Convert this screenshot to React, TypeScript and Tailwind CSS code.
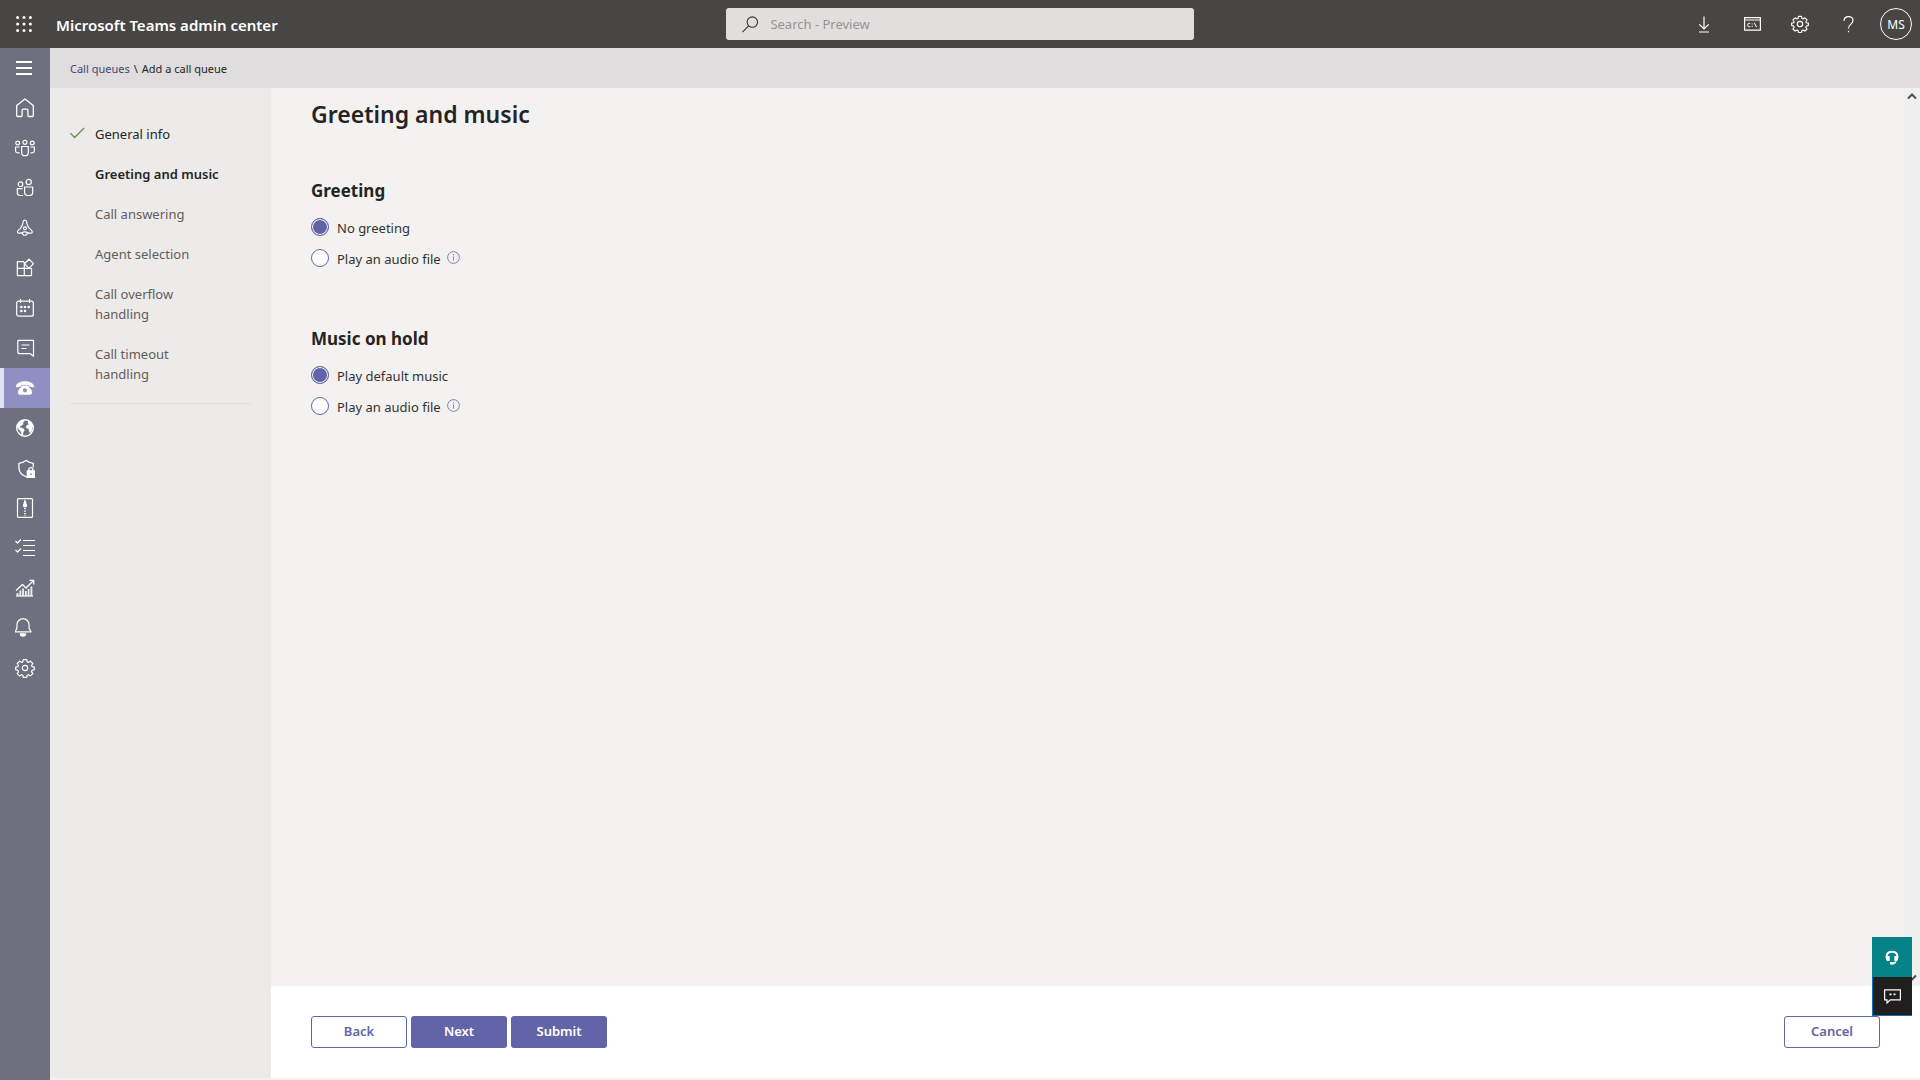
import type { ReactNode, SVGProps } from "react";

function Icon({ size = 20, children, ...rest }: { size?: number; children: ReactNode } & SVGProps<SVGSVGElement>) {
  return (
    <svg
      width={size}
      height={size}
      viewBox="0 0 20 20"
      fill="none"
      stroke="currentColor"
      strokeWidth="1.2"
      strokeLinejoin="round"
      aria-hidden="true"
      {...rest}
    >
      {children}
    </svg>
  );
}

const gearPath =
  "M8.3 1.6h3.4l.5 2.3 1.2.5 2-1.3 2.4 2.4-1.3 2 .5 1.1 2.3.5v2.6l-2.3.7-.5 1.2 1.3 2-2.4 2.3-2-1.2-1.2.5-.5 2.2H8.3l-.5-2.2-1.2-.5-2 1.2-2.4-2.3 1.3-2-.5-1.2-2.3-.7V9.1l2.3-.5.5-1.100-1.300-2 2.400-2.400 2 1.300 1.200-.5z";

const navItems: { label: string; active?: boolean; icon: ReactNode }[] = [
  {
    label: "Dashboard",
    icon: (
      <Icon strokeWidth="1.3">
        <path d="M1.700 7.600 10 1l8.300 6.600v9.900a1 1 0 0 1-1 1h-3.400a1 1 0 0 1-1-1v-5.300a1 1 0 0 0-1-1H8.100a1 1 0 0 0-1 1v5.300a1 1 0 0 1-1 1H2.700a1 1 0 0 1-1-1z" />
      </Icon>
    ),
  },
  {
    label: "Teams",
    icon: (
      <Icon>
        <circle cx="2.700" cy="5" r="1.900" />
        <circle cx="10" cy="4.300" r="2" />
        <circle cx="17.300" cy="5" r="1.900" />
        <path d="M6.700 8.500h6.600v5.900a3.300 3.300 0 0 1-6.600 0zM4.700 9H.6v3.700c0 1.600 1.400 2.600 4.100 2.100M15.300 9h4.100v3.700c0 1.600-1.400 2.600-4.100 2.100" />
      </Icon>
    ),
  },
  {
    label: "Users",
    icon: (
      <Icon>
        <circle cx="5.500" cy="6.200" r="2.300" />
        <circle cx="13.700" cy="4" r="2.600" />
        <path d="M9.600 9h8.100v5.500a3 3 0 0 1-3 3h-2.100a3 3 0 0 1-3-3zM7.500 10.700H2.300v4.100a2.700 2.700 0 0 0 2.700 2.700h3" />
      </Icon>
    ),
  },
  {
    label: "Teams devices",
    icon: (
      <Icon>
        <path d="M8.100 4c0-2.600 3.300-2.600 3.500 0 .3 3.200 1.600 5.600 4.900 8.400 1.400 1.300.8 2.900-.9 2.800l-3.100-.3c-.6 3.100-4.700 3.100-5.300 0l-3.100.3c-1.700.1-2.300-1.500-.9-2.800C6.500 9.600 7.800 7.200 8.100 4z" />
        <circle cx="9.900" cy="10.300" r="1.500" />
        <path d="M7.200 14.900c.9-1.500 4.400-1.500 5.300 0" />
      </Icon>
    ),
  },
  {
    label: "Teams apps",
    icon: (
      <Icon>
        <path d="M9 3.700H2.300v6.600h14.200v7.300H3a.7.7 0 0 1-.7-.7V10M9.300 4v13.500M16.500 10.500V17" />
        <path d="m14 1.200 4.500 4.500-4.500 4.600-4.600-4.600z" />
      </Icon>
    ),
  },
  {
    label: "Meetings",
    icon: (
      <Icon>
        <rect x="1.700" y="3.200" width="16.600" height="15" rx="2" />
        <path d="M5.500 1v4M14.500 1v4" />
        <path
          d="M9 8h2v2H9zM12.700 8h2v2h-2zM5.300 8h2v2h-2zM5.300 12h2v2h-2zM9 12h2v2H9z"
          fill="currentColor"
          strokeWidth="0.3"
        />
      </Icon>
    ),
  },
  {
    label: "Messaging policies",
    icon: (
      <Icon>
        <path d="M3.500 2.300h15v16l-3.200-2.600H4.800a2 2 0 0 1-2-2V3a.7.7 0 0 1 .7-.7zM6.500 7h8M6.500 10.500h5" />
      </Icon>
    ),
  },
  {
    label: "Voice",
    active: true,
    icon: (
      <Icon stroke="none" fill="currentColor">
        <path d="M1 8C2.500 1.700 17.500 1.700 19 8c.2 1-.5 1.400-1.400 1.200l-2.700-.6c-.8-.2-1.100-.7-1.200-1.400-2.200-.7-5.200-.7-7.400 0-.1.700-.4 1.200-1.200 1.400l-2.700.6C1.500 9.400.8 9 1 8z" />
        <path
          fillRule="evenodd"
          d="M6.800 7.800c1.800-.5 4.600-.5 6.400 0 .3 1.600 3.900 3.600 3.900 6.500 0 1.500-.8 2.400-2.100 2.400H5c-1.300 0-2.100-.9-2.100-2.400 0-2.900 3.600-4.900 3.900-6.500zm3.200 2.400a2.100 2.100 0 1 0 0 4.200 2.100 2.100 0 0 0 0-4.200z"
        />
      </Icon>
    ),
  },
  {
    label: "Locations",
    icon: (
      <Icon>
        <circle cx="10" cy="10" r="8.300" strokeWidth="1.400" />
        <path
          d="M3 5.500C4.700 3 7 2 9 1.800l.5 1.400L7.800 4.700l.7 1.200-1.800 1.700-1.900.5.7 1.600 2 .4 2.200 1.900-1.400 2.100-.3 3.500-1.300-.7-.7-3.200-2.300-2.500L2 8.500zM13.300 2.500l2.900 1.700 2.100 4.200-1.300 1 .4 2.700-2.200 3.100-1.200-2-.2-2.400-2.200-.5-.6-1.900 1.200-1.500 1.900-.4-1.200-1.300z"
          fill="currentColor"
          strokeWidth="0.200"
        />
      </Icon>
    ),
  },
  {
    label: "Enhanced encryption",
    icon: (
      <Icon strokeWidth="1.300" viewBox="0 -1 20 20">
        <path d="M12 18.200C6.500 16 3.900 13.200 3.900 9V4.300c2.900-.1 5-1 7.200-2.700 2.200 1.700 4.300 2.600 7.200 2.700v4" />
        <path d="M12.300 12h7.200v6.400h-7.200z" fill="currentColor" />
        <path d="M13.900 12v-1.400a2 2 0 0 1 4 0V12" />
        <path d="M15.900 14.500v1.500" stroke="#6e6f7f" />
      </Icon>
    ),
  },
  {
    label: "Policy packages",
    icon: (
      <Icon>
        <rect x="2.500" y=".6" width="15" height="18.800" rx="1" />
        <path d="M10 2.500 8.500 7.500A1.500 1.500 0 0 0 11.500 7.500z" fill="currentColor" />
        <path d="M10 10v8" strokeDasharray="1.300 1.200" strokeWidth="1.600" />
      </Icon>
    ),
  },
  {
    label: "Planning",
    icon: (
      <Icon>
        <path d="M8 2.500h12M8 7.500h12M8 12.500h12M8 17.500h12M.5 3l2 2L6 1.500M.5 12l2 2L6 10.500" />
      </Icon>
    ),
  },
  {
    label: "Analytics & reports",
    icon: (
      <Icon>
        <path d="m1 12.500 6.500-6 3.500 3.500 7.500-7.500M14.500 2.300h4.200v4.200" strokeWidth="1.300" />
        <path d="M2.500 15v3M5.300 12.500V18M8 10.500V18M10.800 13v5M13.600 11v7M16.400 8.500V18" strokeWidth="1.900" opacity=".85" />
        <path d="M1 18h17" />
      </Icon>
    ),
  },
  {
    label: "Notifications & alerts",
    icon: (
      <Icon viewBox="2 1 20 20">
        <path d="M1.900 14.800h16.200l-2-3.200V7.800a6.100 6.100 0 0 0-12.200 0v3.800z" />
        <path d="M7.300 16.800a2.700 2.300 0 0 0 5.400 0z" fill="currentColor" />
      </Icon>
    ),
  },
  {
    label: "Other settings",
    icon: (
      <Icon>
        <path d={gearPath} />
        <circle cx="10" cy="10" r="2.700" />
      </Icon>
    ),
  },
];

const steps = [
  { label: "General info", state: "done" },
  { label: "Greeting and music", state: "current" },
  { label: "Call answering", state: "todo" },
  { label: "Agent selection", state: "todo" },
  { label: "Call overflow handling", state: "todo" },
  { label: "Call timeout handling", state: "todo" },
];

function InfoButton() {
  return (
    <button type="button" aria-label="More information" className="ml-1.5 text-[#7f80b8]">
      <svg width="13" height="13" viewBox="0 0 13 13" fill="none" stroke="currentColor" aria-hidden="true">
        <circle cx="6.500" cy="6.500" r="5.900" />
        <path d="M6.500 5.500v4M6.500 3.200v1.200" />
      </svg>
    </button>
  );
}

function Radio({ id, name, label, checked, info }: { id: string; name: string; label: string; checked?: boolean; info?: boolean }) {
  return (
    <div className="flex h-[31px] items-center">
      <input
        id={id}
        type="radio"
        name={name}
        defaultChecked={checked}
        className="size-[18px] shrink-0 appearance-none rounded-full border border-[#6264a7] bg-white checked:border-[#6264a7] checked:bg-[#6264a7] checked:shadow-[inset_0_0_0_1px_#fff]"
      />
      <label htmlFor={id} className="pl-2 pt-0.5 text-[13px] leading-5 text-[#323130]">
        {label}
      </label>
      {info && <InfoButton />}
    </div>
  );
}

const outlineButton =
  "h-8 w-24 rounded-[3px] border border-[#6264a7] bg-white text-[13px] font-semibold text-[#6264a7]";
const solidButton = "h-8 w-24 rounded-[3px] bg-[#6264a7] text-[13px] font-semibold text-white";

export default function App() {
  return (
    <div className="flex h-screen flex-col overflow-hidden bg-[#f3f2f1] font-['Noto_Sans',sans-serif] text-[#252423]">
      <header className="grid h-12 shrink-0 grid-cols-[1fr_468px_1fr] items-center bg-[#484644] text-white">
        <div className="flex items-center">
          <button type="button" aria-label="App launcher" className="flex h-12 w-12 items-center justify-center">
            <svg width="16" height="16" viewBox="0 0 16 16" fill="currentColor" aria-hidden="true">
              {[1.600, 8, 14.400].map((y) => [1.600, 8, 14.400].map((x) => <circle key={`${x}-${y}`} cx={x} cy={y} r="1.500" />))}
            </svg>
          </button>
          <span className="pl-2 pt-0.5 text-[15px] font-semibold">Microsoft Teams admin center</span>
        </div>
        <label className="flex h-8 items-center rounded-[3px] bg-[#e1dfdd] pl-4 text-[#323130]">
          <svg width="17" height="17" viewBox="0 0 17 17" fill="none" stroke="currentColor" strokeWidth="1.100" aria-hidden="true">
            <circle cx="10.700" cy="6" r="5.400" />
            <path d="M6.800 9.900.5 16.300" />
          </svg>
          <input
            type="search"
            aria-label="Search"
            placeholder="Search - Preview"
            className="w-full bg-transparent pl-3 pt-0.5 text-[13px] outline-none placeholder:text-[#979593]"
          />
        </label>
        <div className="flex items-center justify-end pr-2">
          <button type="button" aria-label="Downloads" className="flex size-12 items-center justify-center">
            <svg width="12" height="17" viewBox="0 0 12 17" fill="none" stroke="currentColor" strokeWidth="1.200" aria-hidden="true">
              <path d="M6 .5v12M1.300 8.300 6 13l4.700-4.700M1 16h10" />
            </svg>
          </button>
          <button type="button" aria-label="Command line" className="flex size-12 items-center justify-center">
            <svg width="17" height="14" viewBox="0 0 17 14" fill="none" stroke="currentColor" aria-hidden="true">
              <path d="M.6.6h15.800v12.600H.6zM.6 3h15.800" strokeWidth="1.200" />
              <path d="M6.300 6.500c-2-.8-2.500 0-2.500 1.500s.5 2.400 2.500 1.600M8.200 6.500v1M8.200 9v1M10.300 5.800l2.300 4.500" />
            </svg>
          </button>
          <button type="button" aria-label="Settings" className="flex size-12 items-center justify-center">
            <Icon size={18} strokeWidth="1.300">
              <path d={gearPath} />
              <circle cx="10" cy="10" r="3" />
            </Icon>
          </button>
          <button type="button" aria-label="Help" className="flex size-12 items-center justify-center">
            <svg width="11" height="17" viewBox="0 0 11 17" fill="none" stroke="currentColor" strokeWidth="1.200" aria-hidden="true">
              <path d="M1 5C1 2 2.800.7 5.400.7S10 2.200 10 4.600C10 8 5.500 8.300 5.500 12.500M5.500 14.800v1.500" />
            </svg>
          </button>
          <button
            type="button"
            aria-label="Account MS"
            className="ml-2 flex size-8 items-center justify-center rounded-full border border-white pt-0.5 text-xs"
          >
            MS
          </button>
        </div>
      </header>

      <div className="flex min-h-0 flex-1">
        <nav aria-label="Main" className="flex w-[50px] shrink-0 flex-col bg-[#6e6f7f] text-white">
          <button type="button" aria-label="Toggle navigation" className="flex h-10 items-center justify-center pr-0.5">
            <svg width="16" height="14" viewBox="0 0 16 14" stroke="currentColor" strokeWidth="2" aria-hidden="true">
              <path d="M0 1h16M0 7h16M0 13h16" />
            </svg>
          </button>
          {navItems.map((item) => (
            <a
              key={item.label}
              href="#"
              aria-label={item.label}
              aria-current={item.active ? "page" : undefined}
              className={
                item.active
                  ? "flex h-10 items-center justify-center border-l-4 border-[#e2e2f6] bg-[#8f90c1] pr-1"
                  : "flex h-10 items-center justify-center"
              }
            >
              {item.icon}
            </a>
          ))}
        </nav>

        <div className="flex min-w-0 flex-1 flex-col">
          <nav aria-label="Breadcrumb" className="flex h-10 shrink-0 items-center bg-[#dfdddd] pl-5 pt-0.5 text-[11px]">
            <a href="#" className="text-[#464775]">
              Call queues
            </a>
            <span className="px-1">\</span>
            <span>Add a call queue</span>
          </nav>

          <div className="mb-0.5 flex min-h-0 flex-1">
            <aside className="w-[221px] shrink-0 bg-[#edebe9] px-5 pt-[26px]">
              <ol className="border-b border-[#e1dfdd] pb-[9px] text-[13px] leading-5">
                {steps.map((step) => (
                  <li key={step.label} className="flex py-2.5">
                    <span className="w-[25px] shrink-0 pt-[3px]">
                      {step.state === "done" && (
                        <svg width="15" height="12" viewBox="0 0 15 12" fill="none" stroke="#6b8f4e" strokeWidth="1.300" aria-label="Completed">
                          <path d="m.4 6.200 4.200 4.300L14.100 1" />
                        </svg>
                      )}
                    </span>
                    <a
                      href="#"
                      className={
                        step.state === "current"
                          ? "whitespace-nowrap font-semibold"
                          : step.state === "done"
                            ? "w-28"
                            : "w-28 text-[#605e5c]"
                      }
                    >
                      {step.label}
                    </a>
                  </li>
                ))}
              </ol>
            </aside>

            <div className="flex min-w-0 flex-1 flex-col">
              <div className="flex min-h-0 flex-1">
                <main className="min-w-0 flex-1 px-10 pt-2.5">
                  <h1 className="text-[23px] font-semibold leading-8">Greeting and music</h1>
                  <fieldset aria-labelledby="greeting-title" className="pt-[49px]">
                    <h2 id="greeting-title" className="pb-2 text-[17px] font-bold leading-6">
                      Greeting
                    </h2>
                    <Radio id="greet-none" name="greeting" label="No greeting" checked />
                    <Radio id="greet-file" name="greeting" label="Play an audio file" info />
                  </fieldset>
                  <fieldset aria-labelledby="music-title" className="pt-[54px]">
                    <h2 id="music-title" className="pb-2 text-[17px] font-bold leading-6">
                      Music on hold
                    </h2>
                    <Radio id="music-default" name="music" label="Play default music" checked />
                    <Radio id="music-file" name="music" label="Play an audio file" info />
                  </fieldset>
                </main>
                <div className="flex w-[17px] shrink-0 flex-col items-center justify-between bg-[#f0f0f1] py-1 text-[#505050]">
                  <svg width="10" height="8" viewBox="0 0 10 8" fill="none" stroke="currentColor" strokeWidth="2" aria-hidden="true">
                    <path d="m1 6.500 4-4 4 4" />
                  </svg>
                  <svg width="10" height="8" viewBox="0 0 10 8" fill="none" stroke="currentColor" strokeWidth="2" aria-hidden="true">
                    <path d="m1 1.500 4 4 4-4" />
                  </svg>
                </div>
              </div>
              <footer className="flex h-[92px] shrink-0 items-center justify-between bg-white px-10">
                <div className="flex gap-1">
                  <button type="button" className={outlineButton}>
                    Back
                  </button>
                  <button type="button" className={solidButton}>
                    Next
                  </button>
                  <button type="button" className={solidButton}>
                    Submit
                  </button>
                </div>
                <button type="button" className={outlineButton}>
                  Cancel
                </button>
              </footer>
            </div>
          </div>
        </div>
      </div>

      <div className="fixed bottom-16 right-2 flex w-10 flex-col text-white">
        <button type="button" aria-label="Need help?" className="flex h-10 items-center justify-center bg-[#038387]">
          <svg width="14" height="15" viewBox="0 0 14 15" fill="none" stroke="currentColor" aria-hidden="true">
            <path d="M3.500 10.500C.6 8.500.5 1.800 7 1.800s6.400 6.700 3.500 8.700" strokeWidth="2" />
            <path d="M3.200 6v5M10.800 6v5" strokeWidth="3" />
            <path d="M11 11.500c-.5 1.500-1.500 2-4 2" strokeWidth="1.500" />
            <path d="M5 13.300h4" strokeWidth="2.500" />
          </svg>
        </button>
        <button
          type="button"
          aria-label="Give feedback"
          className="flex h-[39px] items-center justify-center border-b border-l border-[#106ebe] bg-[#201f1e]"
        >
          <svg width="17" height="15" viewBox="0 0 17 15" fill="none" stroke="currentColor" strokeWidth="1.200" aria-hidden="true">
            <path d="M.6.800h15.800v10H6.300L3 14v-3.200H.6z" />
            <path d="M6.500 4.500v1.800M10.500 4.500v1.800" strokeWidth="2" />
          </svg>
        </button>
      </div>
    </div>
  );
}
